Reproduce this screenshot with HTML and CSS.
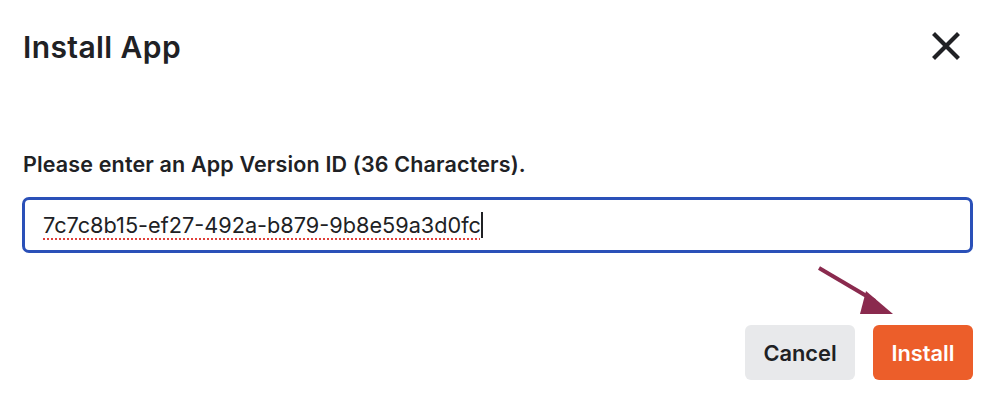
FILE: index.html
```html
<!DOCTYPE html>
<html>
<head>
<meta charset="utf-8">
<link rel="stylesheet" href="styles.css">
</head>
<body>
<div class="dialog">
  <div class="header">
    <h1 class="title">Install App</h1>
    <button class="close" aria-label="Close">
      <svg width="28" height="28" viewBox="0 0 28 28"><path d="M3 3 L25 25 M25 3 L3 25" stroke="#202124" stroke-width="4.2" stroke-linecap="square"/></svg>
    </button>
  </div>
  <label class="label">Please enter an App Version ID (36 Characters).</label>
  <div class="input"><span class="value">7c7c8b15-ef27-492a-b879-9b8e59a3d0fc</span><span class="caret"></span></div>
  <div class="footer">
    <svg class="arrow" width="90" height="60" viewBox="0 0 90 60"><line x1="4" y1="3" x2="60" y2="36" stroke="#8a2a4e" stroke-width="4"/><polygon points="51,26 78,49 45,49" fill="#8a2a4e"/></svg>
    <button class="btn cancel">Cancel</button>
    <button class="btn install">Install</button>
  </div>
</div>
</body>
</html>
```

FILE: styles.css
```css
html, body { margin: 0; background: #fff; }
body { font-family: Inter, "Noto Sans", sans-serif; color: #202124; }
.dialog { padding: 24px 26px 0 22px; width: 951px; }
.header { display: flex; justify-content: space-between; align-items: center; height: 46px; }
.title { margin: 0 0 0 1px; font-size: 30px; font-weight: 600; letter-spacing: 0.4px; color: #202124; }
.close { border: 0; background: none; padding: 0; margin: -2px 13px 0 0; width: 28px; height: 28px; display: flex; }
.label { display: block; margin: 81px 0 0 1px; font-size: 21.5px; font-weight: 600; letter-spacing: 0.15px; color: #202124; line-height: 26px; }
.input { margin-top: 20px; height: 50px; border: 3px solid #2a50b8; border-radius: 7px; display: flex; align-items: center; padding-left: 18px; font-size: 21.7px; color: #202124; }
.value { text-decoration: underline dotted #e0403a; text-decoration-thickness: 2px; text-underline-offset: 5px; }
.caret { width: 2px; height: 26px; background: #202124; margin-left: 0; }
.footer { position: relative; display: flex; justify-content: flex-end; gap: 18px; margin-top: 72px; }
.arrow { position: absolute; left: 793px; top: -60px; }
.btn { border: 0; border-radius: 6px; height: 55px; font-family: Inter, "Noto Sans", sans-serif; font-size: 21.8px; font-weight: 600; padding: 0; }
.cancel { width: 110px; background: #e8e9eb; color: #202124; }
.install { width: 100px; background: #ec5e2a; color: #fff; }
```
